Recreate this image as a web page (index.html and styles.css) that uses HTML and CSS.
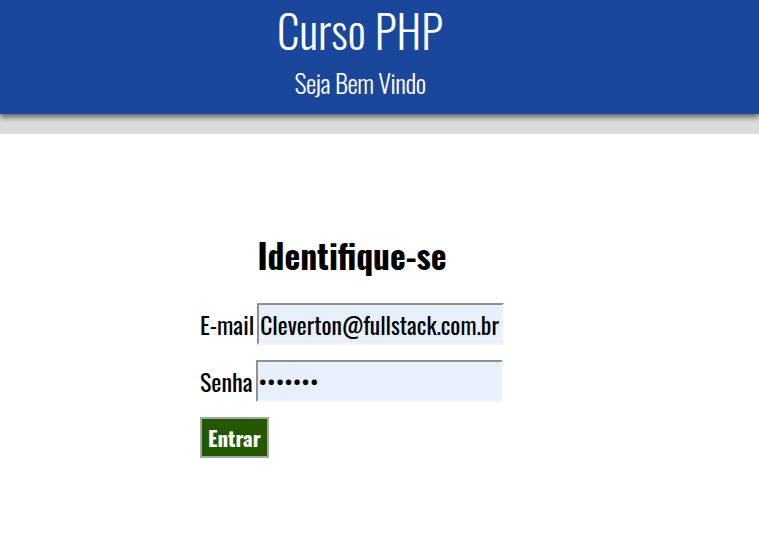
FILE: index.html
```html
<!DOCTYPE html>
<html lang="pt-BR">
<head>
<meta charset="utf-8">
<title>Curso PHP</title>
<link rel="stylesheet" href="styles.css">
</head>
<body>
<header class="topo">
  <div class="topo-inner">
    <h1 class="titulo">Curso PHP</h1>
    <p class="subtitulo">Seja Bem Vindo</p>
  </div>
</header>
<div class="faixa"></div>
<main class="conteudo">
  <form class="login">
    <h2 class="login-titulo">Identifique-se</h2>
    <div class="campo">
      <label class="rotulo" for="email">E-mail</label>
      <input class="entrada" id="email" type="text" value="Cleverton@fullstack.com.br">
    </div>
    <div class="campo">
      <label class="rotulo" for="senha">Senha</label>
      <input class="entrada" id="senha" type="password" value="1234567">
    </div>
    <button class="botao" type="button">Entrar</button>
  </form>
</main>
</body>
</html>
```
FILE: styles.css
```css
body {
  margin: 0;
  font-family: "Oswald", "Liberation Sans Narrow", "DejaVu Sans Condensed", sans-serif;
  background: #fff;
}
.topo {
  background: #1a479b;
  height: 114px;
  box-shadow: 0 3px 6px rgba(0,0,0,0.6);
  position: relative;
  z-index: 1;
}
.topo-inner {
  width: 720px;
  text-align: center;
  color: #fff;
}
.titulo {
  margin: 0;
  font-size: 45px;
  font-weight: 300;
  line-height: 60px;
}
.subtitulo {
  margin: 8px 0 0;
  font-size: 26px;
  font-weight: 300;
  line-height: 30px;
  letter-spacing: -0.5px;
}
.faixa {
  height: 20px;
  background: #dcdcdc;
}
.conteudo {
  padding: 99px 0 0 200px;
}
.login {
  display: flex;
  flex-direction: column;
  align-items: flex-start;
  width: 304px;
}
.login-titulo {
  align-self: stretch;
  text-align: center;
  margin: 0 0 26px;
  font-size: 33.5px;
  font-weight: 700;
  line-height: 44px;
}
.campo {
  display: flex;
  align-items: center;
  margin-bottom: 15px;
}
.rotulo {
  font-size: 24px;
  margin-right: 3px;
  white-space: nowrap;
  flex-shrink: 0;
}
.entrada {
  box-sizing: border-box;
  flex-shrink: 0;
  width: 247px;
  height: 42px;
  padding: 0 0 0 1px;
  border: 2px solid #909090;
  border-right-color: #f6f6f6;
  border-bottom-color: #f6f6f6;
  background: #e8f0fe;
  font-family: inherit;
  font-size: 23.6px;
  color: #000;
}
.botao {
  box-sizing: border-box;
  height: 41px;
  padding: 0 6px;
  background: #245800;
  color: #fff;
  border: 2px solid #a5a5a5;
  font-family: inherit;
  font-size: 21px;
  font-weight: 700;
}
```
